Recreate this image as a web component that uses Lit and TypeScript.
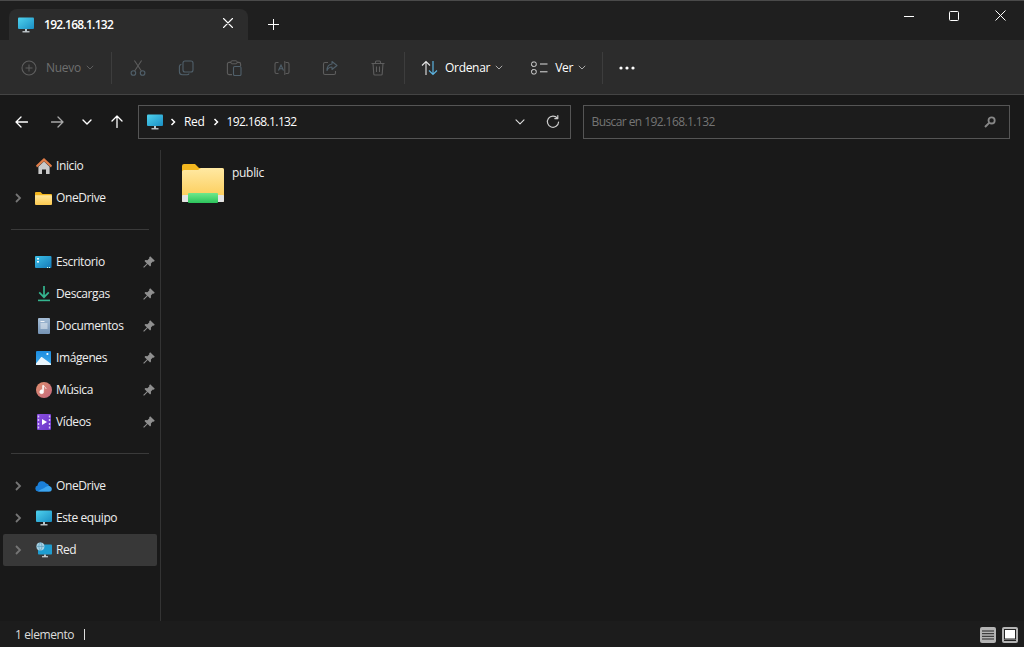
import { LitElement, html, css, svg } from 'lit';
import { customElement } from 'lit/decorators.js';

const line = (d: string, color = '#fff', w = 1.2) =>
  svg`<path d=${d} fill="none" stroke=${color} stroke-width=${w} stroke-linecap="round" stroke-linejoin="round"/>`;

const icon = (w: number, h: number, body: unknown) =>
  html`<svg width=${w} height=${h} viewBox="0 0 ${w} ${h}">${body}</svg>`;

const monitor = (w = 16) => html`<svg width=${w} height=${w} viewBox="0 0 16 16">
  <defs><linearGradient id="mon" x1="0" y1="0" x2="1" y2="1"><stop offset="0" stop-color="#4fd2ee"/><stop offset="1" stop-color="#1a8fc4"/></linearGradient></defs>
  <rect x="0" y="0.5" width="16" height="11.5" rx="1" fill="url(#mon)"/>
  <rect x="7" y="12" width="2" height="2.4" fill="#b9c6cc"/>
  <rect x="4.5" y="14.2" width="7" height="1.2" fill="#d7dfe3"/>
</svg>`;

const chevron = html`<svg class="chev" width="8" height="10" viewBox="0 0 8 10"><path d="M2 1l4 4-4 4" fill="none" stroke="#757575" stroke-width="1.8"/></svg>`;
const crumb = html`<svg width="6" height="8" viewBox="0 0 6 8"><path d="M1.5 1l3 3-3 3" fill="none" stroke="#fff" stroke-width="1.5"/></svg>`;
const caret = (c: string) => html`<svg class="caret" width="8" height="5" viewBox="0 0 8 5"><path d="M.8.8L4 4l3.2-3.2" fill="none" stroke=${c} stroke-width="1"/></svg>`;
const pin = html`<svg width="12" height="12" viewBox="0 0 12 12"><path d="M7.200 .2l4.600 4.600-1.100 1-.8-.3-2 2 .1 2-.9.9-2.400-2.400L1 11.800l-.8-.8 3.700-3.600-2.400-2.400.9-.9 2 .1 2-2-.3-.8z" fill="#8f8f8f"/></svg>`;

const folderSmall = html`<svg width="17" height="16" viewBox="0 0 17 16">
  <defs><linearGradient id="fs" x1="0" y1="0" x2="0" y2="1"><stop offset="0" stop-color="#ffe69a"/><stop offset="1" stop-color="#fcc94f"/></linearGradient></defs>
  <path d="M0 3a1 1 0 011-1h4.500l2 2H16a1 1 0 011 1v1H0z" fill="#f2b51d"/>
  <path d="M0 5.200h16a1 1 0 011 1V14a1 1 0 01-1 1H1a1 1 0 01-1-1z" fill="url(#fs)"/>
</svg>`;

const navIcons: Record<string, unknown> = {
  home: html`<svg width="16" height="16" viewBox="0 0 16 16">
    <path d="M8 0L0 7.600 1 9.400 8 3.200l7 6.200 1-1.800z" fill="#e27d48"/>
    <path d="M2.400 8.800L8 3.600l5.600 5.200V16H10v-4.500H6V16H2.400z" fill="#c9c9c9"/>
  </svg>`,
  folder: folderSmall,
  desktop: html`<svg width="17" height="14" viewBox="0 0 17 14">
    <defs><linearGradient id="dk" x1="0" y1="0" x2="1" y2="1"><stop offset="0" stop-color="#3cc1e8"/><stop offset="1" stop-color="#1478b8"/></linearGradient></defs>
    <rect y="1" width="16.500" height="12" rx="1" fill="url(#dk)"/>
    <rect x="2" y="3" width="2" height="1.600" fill="#e8f6fb"/><rect x="2" y="6" width="2" height="1.600" fill="#e8f6fb"/>
    <rect x="12" y="12" width="1" height="1" fill="#cfe"/><rect x="14" y="12" width="1" height="1" fill="#cfe"/>
  </svg>`,
  download: html`<svg width="16" height="16" viewBox="0 0 16 16">
    <path d="M8 0v10.500M3.200 6.400L8 11.200l4.800-4.800" fill="none" stroke="#34b58f" stroke-width="1.700"/>
    <rect x="2" y="13.600" width="12" height="1.600" fill="#34b58f"/>
  </svg>`,
  docs: html`<svg width="14" height="16" viewBox="0 0 14 16">
    <defs><linearGradient id="dc" x1="0" y1="0" x2="0" y2="1"><stop offset="0" stop-color="#a5bdd6"/><stop offset="1" stop-color="#7593b4"/></linearGradient></defs>
    <rect x="1" y="0" width="12" height="16" rx="1" fill="url(#dc)"/>
    <path d="M3.500 3.500h4M3.500 6h7M3.500 8h7M3.500 10h7" stroke="#eef3f8" stroke-width="1"/>
  </svg>`,
  images: html`<svg width="15" height="14" viewBox="0 0 15 14">
    <defs><linearGradient id="im" x1="0" y1="0" x2="0" y2="1"><stop offset="0" stop-color="#1d8ce0"/><stop offset="1" stop-color="#3aa9ec"/></linearGradient></defs>
    <rect width="15" height="14" rx="1" fill="url(#im)"/>
    <circle cx="11.400" cy="3" r="1.100" fill="#fff"/>
    <path d="M0 12.500L5 6.200c.4-.4.8-.4 1.200 0L15 12.800V14H0z" fill="#eaf5fc"/>
  </svg>`,
  music: html`<svg width="16" height="16" viewBox="0 0 16 16">
    <defs><linearGradient id="mu" x1="0" y1="0" x2="1" y2="1"><stop offset="0" stop-color="#e08f6c"/><stop offset="1" stop-color="#c4687f"/></linearGradient></defs>
    <circle cx="8" cy="8" r="8" fill="url(#mu)"/>
    <path d="M7.600 3.400v6.200a1.900 1.900 0 11-1-1.500V3.400zM7.600 3.400c.3 1.600 2.600 1.800 2.600 3.600" fill="#fff" stroke="#fff" stroke-width=".6"/>
  </svg>`,
  videos: html`<svg width="14" height="16" viewBox="0 0 14 16">
    <defs><linearGradient id="vd" x1="0" y1="0" x2="1" y2="1"><stop offset="0" stop-color="#8a4fe0"/><stop offset="1" stop-color="#6a35c8"/></linearGradient></defs>
    <rect width="14" height="16" rx="1" fill="url(#vd)"/>
    <path d="M.8 1.500h1.400v2H.8zM.8 5h1.400v2H.8zM.8 9h1.400v2H.8zM.8 12.500h1.400v2H.8zM11.800 1.500h1.400v2h-1.400zM11.800 5h1.400v2h-1.400zM11.800 9h1.400v2h-1.400zM11.800 12.500h1.400v2h-1.400z" fill="#d9c6f7"/>
    <path d="M5 5l5 3-5 3z" fill="#fff"/>
  </svg>`,
  cloud: html`<svg width="17" height="12" viewBox="0 0 17 12">
    <path d="M3 11.500A3 3 0 012.600 5.600 4.600 4.600 0 0111 3.200a3.600 3.600 0 013.200 3 2.800 2.800 0 01-.2 5.300z" fill="#1a7fd8"/>
    <path d="M3 11.500h11a2.700 2.700 0 002.800-2.600c0-1-.5-2-1.600-2.500-2.600-1-4.200.4-6 1.600-1.800 1-4.800 2-6.200 3.500z" fill="#3da5ee"/>
  </svg>`,
  pc: monitor(16),
  network: html`<svg width="16" height="16" viewBox="0 0 16 16">
    <rect x="2" y="2.500" width="14" height="10" rx=".8" fill="#1f9dd0"/>
    <rect x="8" y="12.500" width="2" height="2" fill="#b9c6cc"/><rect x="6" y="14.200" width="6" height="1.100" fill="#d7dfe3"/>
    <circle cx="4.400" cy="4.400" r="4" fill="#a8d3e6"/>
    <path d="M.6 4.400h7.600M4.400.4c-2 2.400-2 5.600 0 8M4.400.4c2 2.400 2 5.600 0 8" fill="none" stroke="#5d9cb8" stroke-width=".7"/>
  </svg>`,
};

type Nav = { icon: string; label: string; chevron?: boolean; pinned?: boolean; selected?: boolean };

const quick: Nav[] = [
  { icon: 'home', label: 'Inicio' },
  { icon: 'folder', label: 'OneDrive', chevron: true },
];
const pinned: Nav[] = [
  { icon: 'desktop', label: 'Escritorio', pinned: true },
  { icon: 'download', label: 'Descargas', pinned: true },
  { icon: 'docs', label: 'Documentos', pinned: true },
  { icon: 'images', label: 'Imágenes', pinned: true },
  { icon: 'music', label: 'Música', pinned: true },
  { icon: 'videos', label: 'Vídeos', pinned: true },
];
const places: Nav[] = [
  { icon: 'cloud', label: 'OneDrive', chevron: true },
  { icon: 'pc', label: 'Este equipo', chevron: true },
  { icon: 'network', label: 'Red', chevron: true, selected: true },
];

const dis = '#50606b';
const disGrey = '#5d5d5d';

@customElement('app-root')
export class AppRoot extends LitElement {
  static styles = css`
    :host {
      display: flex;
      flex-direction: column;
      width: 1024px;
      height: 647px;
      overflow: hidden;
      background: #191919;
      color: #fff;
      font-family: 'Open Sans', 'Noto Sans', sans-serif;
      font-size: 12px;
      line-height: 16px;
    }
    svg { display: block; flex: none; }

    .titlebar {
      height: 40px;
      box-sizing: border-box;
      flex: none;
      display: flex;
      align-items: flex-end;
      padding-left: 9px;
      background: #1f1f1f;
      border-top: 1px solid #4a4a4a;
    }
    .tab {
      width: 239px;
      height: 31px;
      box-sizing: border-box;
      display: flex;
      align-items: center;
      padding: 0 15px 4px 9px;
      background: #2c2c2c;
      border-radius: 8px 8px 0 0;
      font-weight: 600;
    }
    .tab > svg:first-child { margin-top: 4px; }
    .tab-title { flex: 1; margin: 4px 0 0 10px; letter-spacing: -0.72px; }
    .newtab { margin: 0 0 10px 20px; }
    .winbtns { margin: 0 0 19px auto; display: flex; align-items: center; gap: 35px; padding-right: 18px; }
    .winbtns svg:last-child { margin-left: 1px; }

    .toolbar {
      height: 55px;
      box-sizing: border-box;
      flex: none;
      display: flex;
      align-items: center;
      padding: 1px 0 0 21px;
      background: #2c2c2c;
      border-bottom: 1px solid #444;
    }
    .tool { display: flex; align-items: center; letter-spacing: -0.3px; }
    .new { color: #6f6f6f; gap: 9px; width: 90px; }
    .new .caret { margin-left: -4px; }
    .sep { width: 1px; height: 32px; background: #3d3d3d; flex: none; }
    .ghost { width: 48px; display: flex; justify-content: center; }
    .ghosts { display: flex; padding: 0 2px; }
    .sort { gap: 7px; margin-left: 16px; font-weight: 500; }
    .sort .caret { margin-left: -2px; }
    .view { gap: 7px; margin-left: 28px; font-weight: 500; }
    .view .caret { margin-left: -2px; }
    .sep-end { margin-left: 16px; }
    .more { margin-left: 16px; }

    .addressrow {
      height: 55px;
      box-sizing: border-box;
      flex: none;
      display: flex;
      align-items: flex-start;
      padding: 10px 14px 0 15px;
    }
    .navbtns { width: 123px; height: 33px; flex: none; display: flex; align-items: center; }
    .navbtns svg:nth-child(2) { margin-left: 23px; }
    .navbtns svg:nth-child(3) { margin-left: 18px; }
    .navbtns svg:nth-child(4) { margin-left: 19px; }
    .box {
      height: 34px;
      box-sizing: border-box;
      display: flex;
      align-items: center;
      border: 1px solid #555;
      background: #1c1c1c;
    }
    .addr { width: 433px; padding: 0 10px 0 8px; }
    .addr .right { margin-left: auto; display: flex; align-items: center; gap: 21px; }
    .addr .crumb { margin-left: 7px; }
    .addr span { margin-left: 8px; }
    .addr .red { letter-spacing: -0.3px; margin-right: 1px; }
    .addr .ip { letter-spacing: -0.62px; }
    .search {
      width: 428px;
      margin-left: 12px;
      padding: 0 13px 0 8px;
      color: #757575;
      justify-content: space-between;
      letter-spacing: -0.58px;
    }

    .main { flex: 1; min-height: 0; display: flex; }
    .sidebar {
      width: 161px;
      box-sizing: border-box;
      flex: none;
      padding: 0 3px;
      border-right: 1px solid #333;
    }
    .nav {
      height: 32px;
      display: flex;
      align-items: center;
      position: relative;
      padding-right: 1px;
      color: #eee;
    }
    .nav.selected { background: #383838; border-radius: 2px; }
    .nav .chev { position: absolute; left: 11px; top: 11px; }
    .nav .ico { width: 17px; margin-left: 32px; display: flex; justify-content: center; }
    .nav .label { margin-left: 4px; letter-spacing: -0.4px; }
    .nav .pin { margin-left: auto; padding-right: 1px; }
    .rule { height: 1px; background: #3a3a3a; margin: 15px 8px 16px; }

    .content { flex: 1; padding: 12px 0 0 21px; }
    .item { display: flex; align-items: flex-start; gap: 8px; }
    .item span { margin-top: 3px; color: #eee; letter-spacing: -0.3px; }

    .status {
      height: 26px;
      box-sizing: border-box;
      flex: none;
      display: flex;
      align-items: center;
      padding: 1px 6px 0 15px;
      background: #1c1c1c;
      color: #ddd;
      letter-spacing: -0.4px;
    }
    .caretbar { width: 1px; height: 11px; background: #ddd; margin-left: 10px; }
    .views { margin-left: auto; display: flex; gap: 6px; }
    .vbtn {
      width: 16px;
      height: 16px;
      background: #b4b4b4;
      border-radius: 2px;
      display: flex;
      align-items: center;
      justify-content: center;
    }
  `;

  private nav(n: Nav) {
    return html`<div class="nav ${n.selected ? 'selected' : ''}">
      ${n.chevron ? chevron : ''}
      <div class="ico">${navIcons[n.icon]}</div>
      <div class="label">${n.label}</div>
      ${n.pinned ? html`<div class="pin">${pin}</div>` : ''}
    </div>`;
  }

  render() {
    return html`
      <div class="titlebar">
        <div class="tab">
          ${monitor(16)}
          <div class="tab-title">192.168.1.132</div>
          ${icon(10, 10, line('M.5.5l9 9M9.5.5l-9 9', '#fff', 1.1))}
        </div>
        <div class="newtab">${icon(11, 11, line('M5.5 0v11M0 5.5h11', '#fff', 1))}</div>
        <div class="winbtns">
          ${icon(10, 10, svg`<path d="M0 5.500h10" stroke="#fff" stroke-width="1"/>`)}
          ${icon(10, 10, svg`<rect x=".5" y=".5" width="9" height="9" rx="1" fill="none" stroke="#fff"/>`)}
          ${icon(11, 11, svg`<path d="M.5.5l10 10M10.500.5l-10 10" stroke="#fff" stroke-width="1"/>`)}
        </div>
      </div>

      <div class="toolbar">
        <div class="tool new">
          ${icon(16, 16, svg`<circle cx="8" cy="8" r="7" fill="none" stroke="#5e5e5e" stroke-width="1.100"/><path d="M8 4.500v7M4.500 8h7" stroke="#5e5e5e" stroke-width="1"/>`)}
          <span>Nuevo</span>
          ${caret('#5e5e5e')}
        </div>
        <div class="sep"></div>
        <div class="ghosts">
          <div class="ghost">${icon(16, 16, svg`<circle cx="3.400" cy="13" r="2.300" fill="none" stroke=${dis} stroke-width="1.100"/><circle cx="12.600" cy="13" r="2.300" fill="none" stroke=${dis} stroke-width="1.100"/><path d="M4.600 11L11.600.5M11.400 11L4.400.5" stroke=${disGrey} stroke-width="1.100"/>`)}</div>
          <div class="ghost">${icon(16, 16, svg`<rect x="5" y="1" width="10" height="11" rx="2" fill="none" stroke=${dis} stroke-width="1.100"/><path d="M3.400 4.200C2 4.600 1.400 5.400 1.400 6.500v5.300c0 1.800 1.200 3 3 3h4.600c1 0 1.800-.4 2.200-1.200" fill="none" stroke=${dis} stroke-width="1.100"/>`)}</div>
          <div class="ghost">${icon(16, 16, svg`<path d="M5 2.400H3a1.600 1.600 0 00-1.600 1.600v9A1.600 1.600 0 003 14.600h3" fill="none" stroke=${disGrey} stroke-width="1.100"/><path d="M11 2.400h2A1.600 1.600 0 0114.600 4v2" fill="none" stroke=${disGrey} stroke-width="1.100"/><rect x="5" y=".8" width="6" height="3" rx="1" fill="none" stroke=${disGrey} stroke-width="1"/><rect x="7.500" y="6.500" width="7.500" height="9" rx="1.200" fill="none" stroke=${dis} stroke-width="1.100"/>`)}</div>
          <div class="ghost">${icon(16, 16, svg`<path d="M4.500 2.500H2.500A1.500 1.500 0 001 4v8a1.500 1.500 0 001.500 1.500h2M11.500 2.500h2A1.500 1.500 0 0115 4v8a1.500 1.500 0 01-1.500 1.500h-2" fill="none" stroke=${disGrey} stroke-width="1.100"/><path d="M4.500 10.500L7 5l2.500 5.500M5.400 8.800h3.200" fill="none" stroke=${dis} stroke-width="1.100"/><path d="M10.800 1v14" stroke=${disGrey} stroke-width="1"/>`)}</div>
          <div class="ghost">${icon(16, 16, svg`<path d="M6 2.500H3A1.500 1.500 0 001.500 4v9A1.500 1.500 0 003 14.500h9a1.500 1.500 0 001.500-1.500v-2" fill="none" stroke=${disGrey} stroke-width="1.100"/><path d="M10 1.500l5 4-5 4V7C7.500 7 6 8 5 10.500 5 7 7 4.300 10 4z" fill="none" stroke=${dis} stroke-width="1.100" stroke-linejoin="round"/>`)}</div>
          <div class="ghost">${icon(16, 16, svg`<path d="M1.500 3.500h13M5.500 3.500V2a1 1 0 011-1h3a1 1 0 011 1v1.500M3 3.500l.8 10.600A1 1 0 004.800 15h6.400a1 1 0 001-.9L13 3.500M6.500 6.500v5.500M9.500 6.500v5.500" fill="none" stroke=${disGrey} stroke-width="1.100"/>`)}</div>
        </div>
        <div class="sep"></div>
        <div class="tool sort">
          ${icon(17, 16, svg`<path d="M5 15V1.500M1 5.500l4-4 4 4" fill="none" stroke="#e6e6e6" stroke-width="1.100"/><path d="M12 1v13.500M8 10.500l4 4 4-4" fill="none" stroke="#5cb3e0" stroke-width="1.200"/>`)}
          <span>Ordenar</span>
          ${caret('#aaa')}
        </div>
        <div class="tool view">
          ${icon(17, 14, svg`<rect x=".6" y="1" width="4.600" height="4.400" rx="1.600" fill="none" stroke="#ddd"/><rect x=".6" y="8.600" width="4.600" height="4.400" rx="1.600" fill="none" stroke="#ddd"/><path d="M9 3h7.500M9 10.800h7.500" stroke="#ddd" stroke-width="1"/>`)}
          <span>Ver</span>
          ${caret('#aaa')}
        </div>
        <div class="sep sep-end"></div>
        <div class="more">${icon(16, 4, svg`<circle cx="2" cy="2" r="1.600" fill="#fff"/><circle cx="8" cy="2" r="1.600" fill="#fff"/><circle cx="14" cy="2" r="1.600" fill="#fff"/>`)}</div>
      </div>

      <div class="addressrow">
        <div class="navbtns">
          ${icon(13, 12, line('M12.5 6H1M6 1L1 6l5 5', '#fff', 1.3))}
          ${icon(13, 12, line('M.5 6H12M7 1l5 5-5 5', '#a8a8a8', 1.3))}
          ${icon(10, 6, line('M1 1l4 4 4-4', '#fff', 1.4))}
          ${icon(12, 13, line('M6 12.5V1M1 6l5-5 5 5', '#fff', 1.3))}
        </div>
        <div class="box addr">
          ${monitor(16)}
          <div class="crumb">${crumb}</div>
          <span class="red">Red</span>
          <div class="crumb">${crumb}</div>
          <span class="ip">192.168.1.132</span>
          <div class="right">
            ${icon(10, 6, line('M1 .8l4 4 4-4', '#ddd', 1.1))}
            ${icon(14, 14, line('M11.400 3.200A5.600 5.600 0 1 0 12.600 7M11.800 .6v3h-3', '#ccc', 1.2))}
          </div>
        </div>
        <div class="box search">
          <span>Buscar en 192.168.1.132</span>
          ${icon(12, 12, svg`<circle cx="7.600" cy="4.400" r="3.100" fill="none" stroke="#888" stroke-width="1.800"/><path d="M5.400 6.600L1 11" stroke="#888" stroke-width="2"/>`)}
        </div>
      </div>

      <div class="main">
        <div class="sidebar">
          ${quick.map((n) => this.nav(n))}
          <div class="rule"></div>
          ${pinned.map((n) => this.nav(n))}
          <div class="rule"></div>
          ${places.map((n) => this.nav(n))}
        </div>
        <div class="content">
          <div class="item">
            <svg width="42" height="41" viewBox="0 0 42 41">
              <defs><linearGradient id="fl" x1="0" y1="0" x2="0" y2="1"><stop offset="0" stop-color="#ffe9a3"/><stop offset="1" stop-color="#fcc94f"/></linearGradient>
              <linearGradient id="gr" x1="0" y1="0" x2="0" y2="1"><stop offset="0" stop-color="#6fe88c"/><stop offset="1" stop-color="#2cc45c"/></linearGradient></defs>
              <path d="M0 4a2 2 0 012-2h11l4 4h23a2 2 0 012 2v6H0z" fill="#f3b71f"/>
              <path d="M0 10c0-1 .8-2 2-2h14l3-2h21a2 2 0 012 2v31a1 1 0 01-1 1H1a1 1 0 01-1-1z" fill="url(#fl)"/>
              <rect y="33" width="42" height="7" rx="1" fill="#e4e4e4"/>
              <rect x="6" y="31" width="30" height="10" rx="1" fill="url(#gr)"/>
            </svg>
            <span>public</span>
          </div>
        </div>
      </div>

      <div class="status">
        <span>1 elemento</span>
        <div class="caretbar"></div>
        <div class="views">
          <div class="vbtn">${icon(12, 10, svg`<path d="M0 1h12M0 3.700h12M0 6.300h12M0 9h12" stroke="#222" stroke-width="1"/>`)}</div>
          <div class="vbtn">${icon(12, 12, svg`<rect x=".5" y=".5" width="11" height="9.500" fill="#fff" stroke="#222"/><path d="M0 11.500h12" stroke="#222"/>`)}</div>
        </div>
      </div>
    `;
  }
}
